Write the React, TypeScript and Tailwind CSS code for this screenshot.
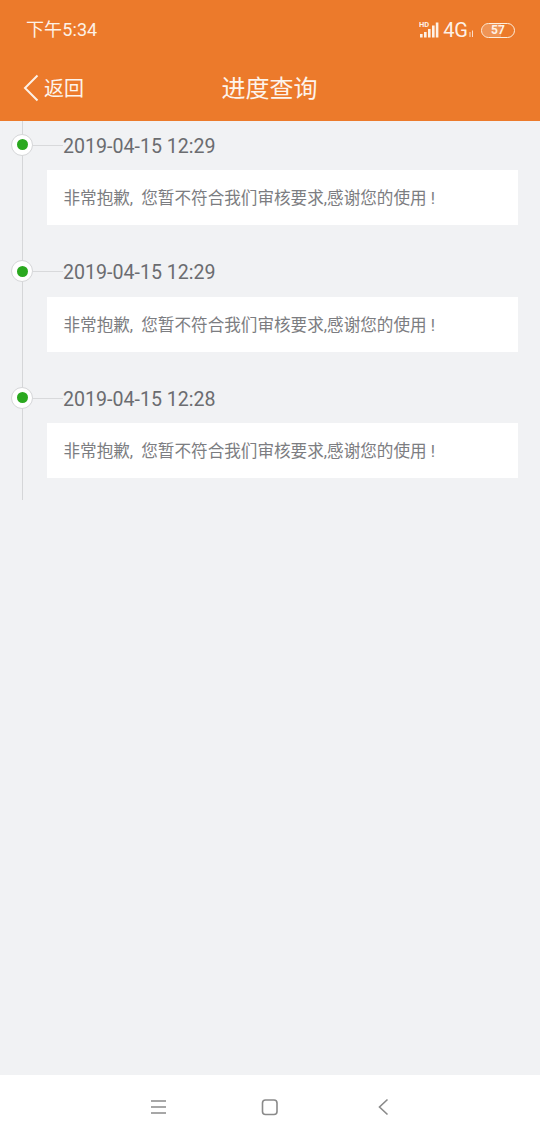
const FONT = "font-['Roboto','Noto_Sans_CJK_SC',sans-serif]";

const records = [
  { time: "2019-04-15 12:29" },
  { time: "2019-04-15 12:29" },
  { time: "2019-04-15 12:28" },
];

function StatusBar() {
  return (
    <div className="flex h-[59px] items-center justify-between pl-[26px] pr-[25px] pt-[1px] text-white">
      <span className="text-[18px] leading-none tracking-[0.1px] text-[#fdf1e6]">下午5:34</span>
      <div className="flex items-center">
        <svg width="21" height="18" viewBox="0 0 21 18" fill="#fdf1e6">
          <text x="0" y="6" fontSize="7.5" fontWeight="700" fontFamily="Roboto">HD</text>
          <rect x="1" y="13" width="2.6" height="3.5" />
          <rect x="5" y="11" width="2.6" height="5.5" />
          <rect x="9" y="8" width="2.6" height="8.5" />
          <rect x="13" y="4.5" width="2.6" height="12" />
          <rect x="16.8" y="1.5" width="2.6" height="15" />
        </svg>
        <span className="ml-[3px] text-[20px] font-normal leading-none text-[#fdf1e6]">4G</span>
        <svg width="8" height="10" viewBox="0 0 8 10" className="mt-[7px]" fill="#fff" opacity="0.75">
          <rect x="1.5" y="3" width="1" height="5" />
          <rect x="4" y="1.5" width="1" height="6.5" />
        </svg>
        <div className="relative ml-[5px] flex h-[15px] w-[34px] items-center justify-center overflow-hidden rounded-full border-[1.5px] border-[#fdeedd]">
          <div className="absolute inset-y-0 left-0 w-[60%] bg-white/20" />
          <span className="relative text-[12px] font-bold leading-none text-[#fdf1e6]">57</span>
        </div>
      </div>
    </div>
  );
}

function Header() {
  return (
    <header className="shrink-0 bg-[#ec7a2b]">
      <StatusBar />
      <div className="relative flex h-[62px] items-center justify-center pb-[3px] text-[#fdf4ec]">
        <div className="absolute left-[22px] top-[15px] flex items-center">
          <svg width="17" height="28" viewBox="0 0 17 28" fill="none" stroke="#fdf1e6" strokeWidth="2">
            <path d="M15.5 1.5 L3 14 L15.5 26.5" />
          </svg>
          <span className="ml-[5px] mt-[1px] text-[20px] leading-none">返回</span>
        </div>
        <h1 className="-ml-[1px] text-[24px] font-normal leading-none">进度查询</h1>
      </div>
    </header>
  );
}

function TimelineItem({ time }: { time: string }) {
  return (
    <div className="h-[126.5px] pt-[12.2px]">
      <div className="relative flex h-[27px] items-center pl-[63px]">
        <div className="absolute left-[11px] top-[0.4px] flex h-[22px] w-[22px] items-center justify-center rounded-full border border-[#d5d6d8] bg-white">
          <div className="h-[11px] w-[11px] rounded-full bg-[#2aa81f]" />
        </div>
        <div className="absolute left-[33px] top-[11.4px] h-px w-[30px] bg-[#d8d9db]" />
        <span className="text-[19.6px] leading-none text-[#6b6c70]">{time}</span>
      </div>
      <div className="ml-[47px] mr-[22px] mt-[9.9px] flex h-[55px] items-center whitespace-pre bg-white pl-[16.5px] pt-[4px] text-[16.6px] leading-none text-[#7c7d81] [word-spacing:4px]">
        非常抱歉, 您暂不符合我们审核要求,感谢您的使用<span className="ml-[4px]">!</span>
      </div>
    </div>
  );
}

function NavBar() {
  return (
    <nav className="relative h-[65px] shrink-0 bg-white">
      <svg width="540" height="65" viewBox="0 0 540 65" fill="none" stroke="#8a8a8a" strokeWidth="1.6">
        <path d="M151 26 H166 M151 32 H166 M151 38 H166" />
        <rect x="262.5" y="25" width="14.5" height="14.5" rx="3" />
        <path d="M387.5 24.5 L379.5 32 L387.5 39.5" />
      </svg>
    </nav>
  );
}

export default function App() {
  return (
    <div className={`flex h-[1140px] w-[540px] flex-col overflow-hidden bg-[#f1f2f4] ${FONT}`}>
      <Header />
      <main className="flex-1">
        <div className="relative h-[379px]">
          <div className="absolute bottom-0 left-[22px] top-0 w-px bg-[#d5d6d8]" />
          <div className="relative">
            {records.map((r, i) => (
              <TimelineItem key={i} time={r.time} />
            ))}
          </div>
        </div>
      </main>
      <NavBar />
    </div>
  );
}
